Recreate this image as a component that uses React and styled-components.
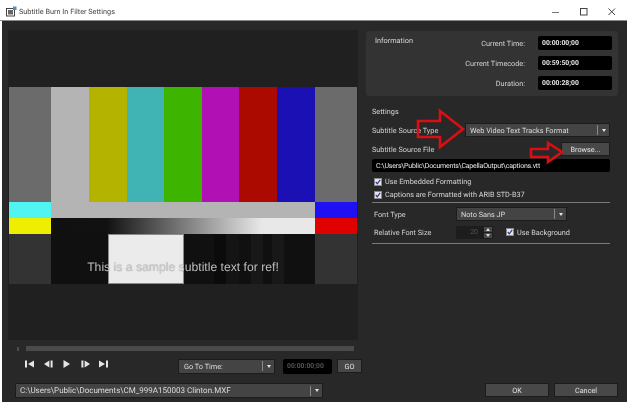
import React from 'react';
import styled, { createGlobalStyle } from 'styled-components';

const GlobalStyle = createGlobalStyle`
  html, body {
    margin: 0;
    padding: 0;
    background: #ffffff;
  }
  body {
    font-family: Roboto, "Noto Sans", sans-serif;
    text-rendering: geometricPrecision;
  }
`;

const Page = styled.div`
  width: 627px;
  height: 404px;
  overflow: hidden;
  position: relative;
  display: flex;
  flex-direction: column;
  background: #fff;
  filter: blur(0.3px);
`;

const TitleBar = styled.div`
  height: 21px;
  display: flex;
  align-items: center;
  padding: 3px 0 0 6px;
  box-sizing: border-box;
  border-bottom: 1px solid #8a8a8a;
  font-size: 7.3px;
  color: #444;
  gap: 2px;
`;

const TitleText = styled.span`
  flex: 1;
`;

const WinButtons = styled.div`
  display: flex;
  align-items: center;
  gap: 20px;
  padding-right: 11px;
  color: #333;
`;

const Dialog = styled.div`
  height: 381px;
  margin-left: 2px;
  background: #282828;
  display: flex;
  color: #d2d2d2;
  font-size: 7.3px;
`;

const LeftColumn = styled.div`
  width: 364px;
  padding: 9px 0 0 6px;
  box-sizing: border-box;
  display: flex;
  flex-direction: column;
`;

const RightColumn = styled.div`
  width: 252px;
  padding-top: 10px;
  display: flex;
  flex-direction: column;
`;

const Preview = styled.div`
  width: 350px;
  height: 310px;
  background: #202020;
  display: flex;
  align-items: center;
  padding-left: 1px;
  box-sizing: border-box;
`;

const Picture = styled.div`
  position: relative;
  width: 348px;
  height: 197px;
  margin-top: 1px;
  display: flex;
`;

const Subtitle = styled.div`
  position: absolute;
  left: 0;
  right: 0;
  top: 173px;
  text-align: center;
  font-family: "Liberation Sans", sans-serif;
  font-size: 12.2px;
  line-height: 14px;
  color: rgba(208, 208, 208, 0.9);
  text-shadow: 0 0 1px rgba(0, 0, 0, 0.35);
`;

const SeekBar = styled.div`
  display: flex;
  align-items: center;
  gap: 7px;
  margin: 6px 0 0 9px;
  height: 5px;
`;

const SeekThumb = styled.div`
  width: 2px;
  height: 4px;
  background: #4d4d4d;
`;

const SeekTrack = styled.div`
  width: 328px;
  height: 5px;
  background: #4a4a4a;
`;

const ControlRow = styled.div`
  display: flex;
  align-items: center;
  margin-top: 7px;
  height: 16px;
`;

const Transport = styled.div`
  width: 170px;
  padding-left: 17px;
  box-sizing: border-box;
  display: flex;
  align-items: center;
  gap: 9.5px;
  margin-top: -4px;
`;

const Combo = styled.div`
  width: ${(p) => p.$width}px;
  height: ${(p) => p.$height || 14}px;
  box-sizing: border-box;
  background: #444444;
  border: 1px solid #1c1c1c;
  display: flex;
  align-items: center;
  flex: none;
  color: #dcdcdc;
`;

const ComboText = styled.span`
  flex: 1;
  padding-left: ${(p) => p.$pad || 4}px;
  font-size: ${(p) => p.$size || 7.3}px;
  white-space: nowrap;
  overflow: hidden;
`;

const ComboArrow = styled.span`
  width: 12px;
  border-left: 1px solid #8a8a8a;
  box-sizing: border-box;
  display: flex;
  align-items: center;
  justify-content: center;
  height: 10px;
  &::after {
    content: '';
    border-left: 2.5px solid transparent;
    border-right: 2.5px solid transparent;
    border-top: 3px solid #e4e4e4;
  }
`;

const TimeField = styled.div`
  flex: none;
  width: ${(p) => p.$width || 74}px;
  height: ${(p) => p.$height || 14}px;
  margin-left: ${(p) => p.$left || 0}px;
  background: #000;
  border-radius: 2px;
  display: flex;
  align-items: center;
  padding-left: 4px;
  box-sizing: border-box;
  font-size: 6.8px;
  font-weight: 700;
  color: ${(p) => (p.$dim ? '#555' : '#e8e8e8')};
`;

const Button = styled.div`
  flex: none;
  width: ${(p) => p.$width}px;
  height: ${(p) => p.$height || 14}px;
  margin-left: ${(p) => p.$left || 0}px;
  box-sizing: border-box;
  background: #484848;
  border: 1px solid #1c1c1c;
  display: flex;
  align-items: center;
  justify-content: center;
  color: #e2e2e2;
`;

const FileRow = styled.div`
  margin: 9px 0 0 7px;
`;

const InfoPanel = styled.div`
  width: 252px;
  height: 65px;
  box-sizing: border-box;
  background: #333333;
  border-radius: 3px;
  padding: 5px 6px 0 9px;
  display: flex;
  justify-content: space-between;
`;

const PanelHeading = styled.span`
  color: #d8d8d8;
`;

const InfoRows = styled.div`
  display: flex;
  flex-direction: column;
  gap: 6px;
`;

const InfoRow = styled.div`
  display: flex;
  align-items: center;
  justify-content: flex-end;
  gap: 13px;
`;

const Settings = styled.div`
  margin-top: 10px;
  padding: 0 8px 0 6px;
  display: flex;
  flex-direction: column;
`;

const SettingsHeading = styled.div`
  height: 12px;
  line-height: 12px;
  margin-bottom: 5px;
  color: #d8d8d8;
`;

const FormRow = styled.div`
  display: flex;
  align-items: center;
  justify-content: space-between;
  height: 14px;
  margin-bottom: ${(p) => p.$after || 0}px;
`;

const PathField = styled.div`
  height: 13px;
  background: #000;
  border-radius: 2px;
  margin: 3px 0;
  padding-left: 4px;
  display: flex;
  align-items: center;
  color: #e6e6e6;
  font-size: 7px;
  letter-spacing: -0.2px;
`;

const CheckRow = styled.label`
  display: flex;
  align-items: center;
  gap: 3px;
  height: 13px;
  color: #d6d6d6;
  margin-left: ${(p) => p.$indent ?? 2}px;
`;

const CheckBox = styled.span`
  width: 8px;
  height: 8px;
  background: #e6e6e6;
  border: 1px solid #888;
  box-sizing: border-box;
  display: flex;
  align-items: center;
  justify-content: center;
`;

const Divider = styled.div`
  height: 1px;
  background: #7a7a7a;
  margin: ${(p) => p.$margin || '1px 0 4px 0'};
`;

const FontRow = styled.div`
  display: flex;
  align-items: center;
  height: 14px;
  margin: 0 0 4px 2px;
`;

const FontLabel = styled.span`
  width: 82px;
  flex: none;
`;

const Spinner = styled.div`
  width: 37px;
  height: 13px;
  background: #1d1d1d;
  display: flex;
  align-items: center;
  justify-content: flex-end;
  color: #555;
  font-size: 7px;
  gap: 6px;
  margin-right: 13px;
  padding-right: 1px;
  box-sizing: border-box;
`;

const SpinButtons = styled.div`
  width: 8px;
  height: 11px;
  display: flex;
  flex-direction: column;
  gap: 1px;
`;

const SpinButton = styled.span`
  flex: 1;
  background: #4a4a4a;
  display: flex;
  align-items: center;
  justify-content: center;
  &::after {
    content: '';
    border-left: 2px solid transparent;
    border-right: 2px solid transparent;
    ${(p) => (p.$up ? 'border-bottom: 3px solid #ddd;' : 'border-top: 3px solid #ddd;')}
  }
`;

const Footer = styled.div`
  margin-top: auto;
  margin-bottom: 5px;
  display: flex;
  justify-content: flex-end;
  gap: 5px;
`;

const ArrowOverlay = styled.svg`
  position: absolute;
  left: 0;
  top: 0;
  pointer-events: none;
`;

const TestPattern = () => (
  <svg width="348" height="197" viewBox="0 0 348 197">
    <defs>
      <linearGradient id="ramp" x1="0" x2="1">
        <stop offset="0" stopColor="#101010" />
        <stop offset="0.21" stopColor="#111" />
        <stop offset="0.8" stopColor="#e8e8e8" />
        <stop offset="1" stopColor="#e8e8e8" />
      </linearGradient>
    </defs>
    <rect width="348" height="197" fill="#101010" />
    {[
      [0, 42, '#6b6b6b'], [42, 38, '#b4b4b4'], [80, 38, '#b4b400'], [118, 37, '#40b4b4'],
      [155, 38, '#3cb400'], [193, 37, '#b010b4'], [230, 38, '#aa0a00'], [268, 38, '#1a10b4'], [306, 42, '#6b6b6b'],
    ].map(([x, w, c]) => <rect key={x} x={x} y="0" width={w} height="115" fill={c} />)}
    <rect x="42" y="115" width="264" height="16" fill="#b4b4b4" />
    <rect x="0" y="115" width="42" height="16" fill="#50f4f0" />
    <rect x="306" y="115" width="42" height="16" fill="#2010f4" />
    <rect x="0" y="131" width="42" height="16" fill="#eeee00" />
    <rect x="306" y="131" width="42" height="16" fill="#e00000" />
    <rect x="42" y="131" width="264" height="16" fill="url(#ramp)" />
    <rect x="0" y="147" width="42" height="50" fill="#333333" />
    <rect x="306" y="147" width="42" height="50" fill="#333333" />
    <rect x="205" y="147" width="12" height="50" fill="#0b0b0b" />
    <rect x="217" y="147" width="13" height="50" fill="#141414" />
    <rect x="242" y="147" width="12" height="50" fill="#181818" />
    <rect x="263" y="147" width="12" height="50" fill="#181818" />
    <rect x="99.5" y="147.5" width="75" height="49" fill="#ebebeb" stroke="#8a8a8a" />
  </svg>
);

const TransportIcon = ({ kind }) => {
  const shapes = {
    first: <><rect x="0" y="0.5" width="2" height="7" /><path d="M9 0.5v7L3 4z" /></>,
    back: <><path d="M5.4 0.5v7L0 4z" /><rect x="6.6" y="0.5" width="2" height="7" /></>,
    play: <path d="M1.5 0v8L8 4z" />,
    fwd: <><rect x="0.4" y="0.5" width="2" height="7" /><path d="M3.6 0.5v7L9 4z" /></>,
    last: <><path d="M0 0.5v7L6 4z" /><rect x="7" y="0.5" width="2" height="7" /></>,
  };
  return <svg width="9" height="8" viewBox="0 0 9 8" fill="#e4e4e4">{shapes[kind]}</svg>;
};

const Check = () => (
  <svg width="6" height="6" viewBox="0 0 6 6" fill="none" stroke="#2b3a9a" strokeWidth="1.2">
    <path d="M0.8 3l1.5 1.8L5.2 0.8" />
  </svg>
);

const WindowIcon = () => (
  <svg width="11" height="11" viewBox="0 0 11 11">
    <rect x="0.5" y="2.5" width="8" height="7.5" fill="none" stroke="#444" />
    <rect x="2" y="4" width="5" height="4.5" fill="#666" />
    <rect x="7" y="0.5" width="3.5" height="3.5" fill="#4a90c8" />
  </svg>
);

export default function App() {
  return (
    <Page>
      <GlobalStyle />
      <TitleBar>
        <WindowIcon />
        <TitleText>Subtitle Burn In Filter Settings</TitleText>
        <WinButtons>
          <svg width="8" height="8" viewBox="0 0 8 8"><path d="M0 4.5h7" stroke="#777" /></svg>
          <svg width="8" height="8" viewBox="0 0 8 8"><rect x="0.5" y="0.5" width="6.5" height="6.5" fill="none" stroke="#444" /></svg>
          <svg width="8" height="8" viewBox="0 0 8 8"><path d="M0.5 0.5l6.5 6.5M7 0.5L0.5 7" stroke="#444" /></svg>
        </WinButtons>
      </TitleBar>
      <Dialog>
        <LeftColumn>
          <Preview>
            <Picture>
              <TestPattern />
              <Subtitle>This is a sample subtitle text for ref!</Subtitle>
            </Picture>
          </Preview>
          <SeekBar>
            <SeekThumb />
            <SeekTrack />
          </SeekBar>
          <ControlRow>
            <Transport>
              <TransportIcon kind="first" />
              <TransportIcon kind="back" />
              <TransportIcon kind="play" />
              <TransportIcon kind="fwd" />
              <TransportIcon kind="last" />
            </Transport>
            <Combo $width={97} $height={15}>
              <ComboText $pad={5}>Go To Time:</ComboText>
              <ComboArrow />
            </Combo>
            <TimeField $width={49} $height={15} $left={8} $dim>00:00:00;00</TimeField>
            <Button $width={25} $left={5}>GO</Button>
          </ControlRow>
          <FileRow>
            <Combo $width={308} $height={15}>
              <ComboText $size={8}>C:\Users\Public\Documents\CM_999A150003 Clinton.MXF</ComboText>
              <ComboArrow />
            </Combo>
          </FileRow>
        </LeftColumn>
        <RightColumn>
          <InfoPanel>
            <PanelHeading>Information</PanelHeading>
            <InfoRows>
              <InfoRow>Current Time:<TimeField>00:00:00;00</TimeField></InfoRow>
              <InfoRow>Current Timecode:<TimeField>00:59:50;00</TimeField></InfoRow>
              <InfoRow>Duration:<TimeField>00:00:28;00</TimeField></InfoRow>
            </InfoRows>
          </InfoPanel>
          <Settings>
            <SettingsHeading>Settings</SettingsHeading>
            <FormRow $after={5}>
              <span>Subtitle Source Type</span>
              <Combo $width={145}>
                <ComboText>Web Video Text Tracks Format</ComboText>
                <ComboArrow />
              </Combo>
            </FormRow>
            <FormRow>
              <span>Subtitle Source File</span>
              <Button $width={49}>Browse...</Button>
            </FormRow>
            <PathField>C:\Users\Public\Documents\CapellaOutput\captions.vtt</PathField>
            <CheckRow><CheckBox><Check /></CheckBox>Use Embedded Formatting</CheckRow>
            <CheckRow><CheckBox><Check /></CheckBox>Captions are Formatted with ARIB STD-B37</CheckRow>
            <Divider />
            <FontRow>
              <FontLabel>Font Type</FontLabel>
              <Combo $width={111}>
                <ComboText>Noto Sans JP</ComboText>
                <ComboArrow />
              </Combo>
            </FontRow>
            <FontRow>
              <FontLabel>Relative Font Size</FontLabel>
              <Spinner>
                20
                <SpinButtons>
                  <SpinButton $up />
                  <SpinButton />
                </SpinButtons>
              </Spinner>
              <CheckRow $indent={0}><CheckBox><Check /></CheckBox>Use Background</CheckRow>
            </FontRow>
            <Divider $margin="0" />
          </Settings>
          <Footer>
            <Button $width={64}>OK</Button>
            <Button $width={64}>Cancel</Button>
          </Footer>
        </RightColumn>
      </Dialog>
      <ArrowOverlay width="627" height="404" viewBox="0 0 627 404">
        <path d="M418 121H440V111L463 129L440 147V137H418Z" fill="none" stroke="#d80f14" strokeWidth="2.6" />
        <path d="M531 149H548V143L562 152L548 162V157H531Z" fill="none" stroke="#d80f14" strokeWidth="2.6" />
      </ArrowOverlay>
    </Page>
  );
}
